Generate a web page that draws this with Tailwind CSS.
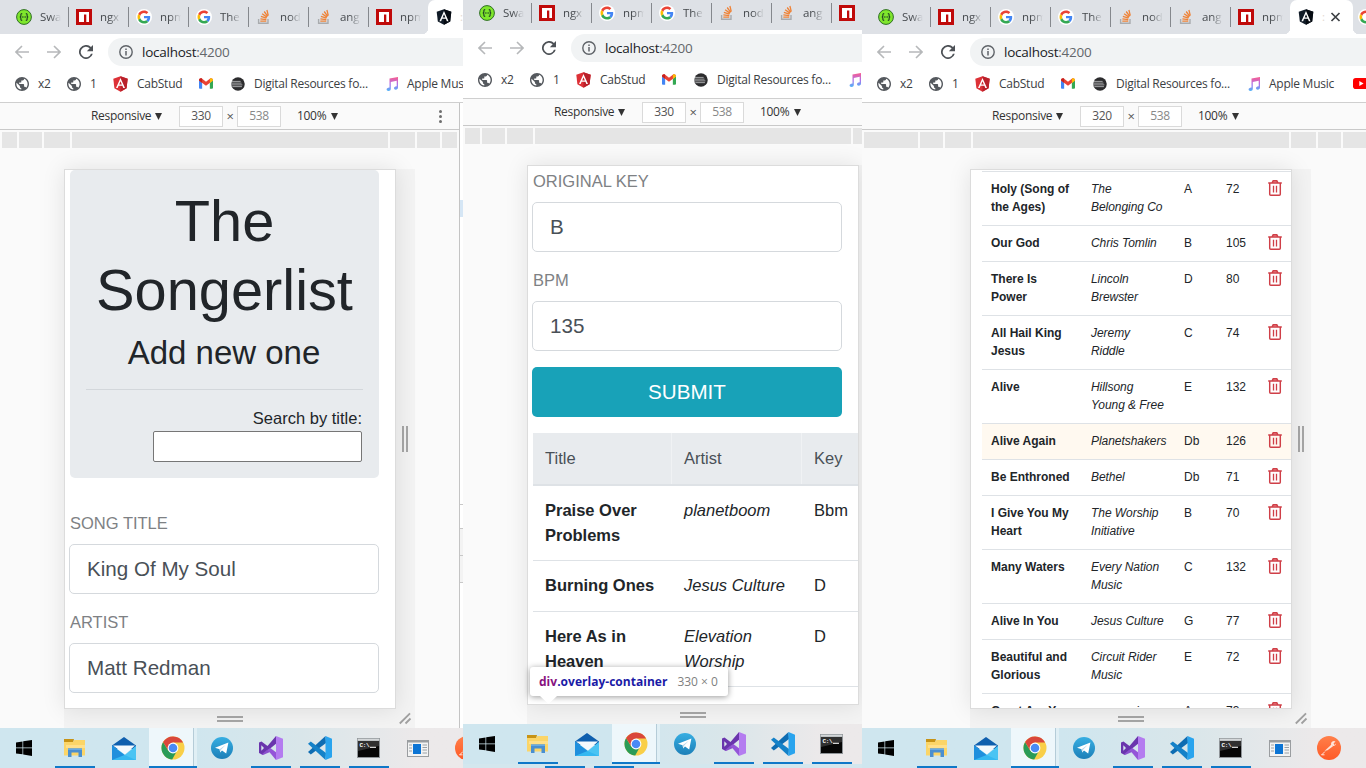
<!DOCTYPE html>
<html lang="en">
<head>
<meta charset="utf-8">
<title>The Songerlist</title>
<script src="https://cdn.jsdelivr.net/npm/@tailwindcss/browser@4"></script>
</head>
<body class="w-[1366px] h-[768px] overflow-hidden bg-white font-['Open_Sans',sans-serif]">
<svg width="0" height="0" class="absolute" aria-hidden="true">
  <defs>
    <linearGradient id="gm" x1="0" y1="0" x2="0" y2="1"><stop offset="0" stop-color="#fa5c8d"/><stop offset=".5" stop-color="#b070ea"/><stop offset="1" stop-color="#4fb4f7"/></linearGradient>
    <linearGradient id="gt" x1="0" y1="0" x2="0" y2="1"><stop offset="0" stop-color="#37aee2"/><stop offset="1" stop-color="#1c7fb8"/></linearGradient>
    <linearGradient id="gp" x1="0" y1="0" x2="0" y2="1"><stop offset="0" stop-color="#ff7f4a"/><stop offset="1" stop-color="#ff5a26"/></linearGradient>
  </defs>
  <symbol id="swagger" viewBox="0 0 16 16"><circle cx="8" cy="8" r="7.400" fill="#7fe62c" stroke="#2f6f25" stroke-width="1"/><path d="M6.200 4.600c-1.500 0-1.300.6-1.300 1.800 0 .9-.3 1.500-1.100 1.600.8.100 1.100.7 1.100 1.600 0 1.200-.2 1.800 1.300 1.800M9.800 4.600c1.500 0 1.300.6 1.300 1.800 0 .9.3 1.500 1.100 1.600-.8.100-1.100.7-1.100 1.600 0 1.200.2 1.800-1.300 1.800" fill="none" stroke="#1d3b24" stroke-width="1.100"/><path d="M5.800 8h4.500" stroke="#1d3b24" stroke-width="1.200" stroke-dasharray="1.200 .4"/></symbol>
  <symbol id="npm" viewBox="0 0 16 16"><path fill="#c00a0a" d="M0 0h16v16H0z"/><path fill="#fff" d="M3 3h10v10h-2.700V5.600H8V13H3z"/></symbol>
  <symbol id="google" viewBox="0 0 48 48"><circle cx="24" cy="24" r="24" fill="#fff"/><g transform="translate(4.500 4.500) scale(.81)"><path fill="#EA4335" d="M24 9.500c3.540 0 6.710 1.220 9.210 3.600l6.850-6.850C35.900 2.380 30.470 0 24 0 14.620 0 6.510 5.380 2.560 13.220l7.980 6.190C12.430 13.720 17.740 9.500 24 9.500z"/><path fill="#4285F4" d="M46.980 24.550c0-1.570-.15-3.090-.38-4.550H24v9.020h12.940c-.58 2.960-2.260 5.480-4.780 7.180l7.730 6c4.510-4.180 7.090-10.360 7.090-17.650z"/><path fill="#FBBC05" d="M10.530 28.590c-.48-1.450-.76-2.990-.76-4.590s.27-3.140.76-4.590l-7.980-6.190C.92 16.460 0 20.120 0 24c0 3.880.92 7.540 2.560 10.780l7.970-6.190z"/><path fill="#34A853" d="M24 48c6.480 0 11.930-2.130 15.890-5.810l-7.730-6c-2.150 1.450-4.920 2.300-8.160 2.300-6.260 0-11.570-4.220-13.470-9.910l-7.980 6.190C6.510 42.620 14.620 48 24 48z"/></g></symbol>
  <symbol id="so" viewBox="0 0 16 16"><path d="M2.600 10v4.200h9.400V10" fill="none" stroke="#a9abae" stroke-width="1.400"/><g stroke="#ef8236" stroke-width="1.300"><path d="M4.300 12.100h6M4.400 9.900l5.900.7M4.900 7.300l5.600 1.900M6.100 4.800l4.900 3.300M8.200 2.500l3.500 4.900M10.900 1l1.400 5.600"/></g></symbol>
  <symbol id="ngdark" viewBox="28 28 194 204"><path fill="#111b27" d="M125 30 31.900 63.200l14.200 123.100L125 230l78.900-43.700 14.200-123.100z"/><path fill="#060b12" d="M125 30v200l78.900-43.700 14.200-123.100z"/><path fill="#fff" d="M125 52.100 66.800 182.600h21.700l11.700-29.200h49.400l11.700 29.200H183L125 52.100zm17 83.300h-34l17-40.900z"/></symbol>
  <symbol id="ng" viewBox="28 28 194 204"><path fill="#dd3137" d="M125 30 31.900 63.200l14.200 123.100L125 230l78.900-43.700 14.200-123.100z"/><path fill="#b9202a" d="M125 30v200l78.900-43.700 14.200-123.100z"/><path fill="#fff" d="M125 52.100 66.800 182.600h21.700l11.700-29.200h49.400l11.700 29.200H183L125 52.100zm17 83.300h-34l17-40.900z"/></symbol>
  <symbol id="globe" viewBox="2 2 20 20"><path fill="#55595e" d="M12 2C6.480 2 2 6.480 2 12s4.480 10 10 10 10-4.480 10-10S17.520 2 12 2zm-1 17.930c-3.950-.49-7-3.850-7-7.930 0-.62.08-1.210.21-1.790L9 15v1c0 1.100.9 2 2 2v1.930zm6.900-2.540c-.26-.81-1-1.390-1.900-1.390h-1v-3c0-.55-.45-1-1-1H8v-2h2c.55 0 1-.45 1-1V7h2c1.100 0 2-.9 2-2v-.41c2.930 1.190 5 4.060 5 7.410 0 2.080-.8 3.970-2.100 5.390z"/></symbol>
  <symbol id="gmailico" viewBox="0 0 16 12"><path fill="#4285f4" d="M0 2.500V10.500A1.200 1.200 0 0 0 1.200 12H3.600V5z"/><path fill="#34a853" d="M12.400 12h2.400a1.200 1.200 0 0 0 1.200-1.300V2.500L12.400 5z"/><path fill="#ea4335" d="M0 2.600C0 .4 2 -.5 3.600.6L8 4 12.400.6C14 -.5 16 .4 16 2.600L8 8.700z"/><path fill="#fbbc04" d="M12.400.6C14 -.5 16 .4 16 2.600L12.400 5.400z"/><path fill="#c5221f" d="M3.600.6C2 -.5 0 .4 0 2.600L3.600 5.400z"/></symbol>
  <symbol id="res" viewBox="0 0 16 16"><circle cx="8" cy="8" r="7.700" fill="#2c2c2e"/><path d="M1 5h10M0 7h12M0 9h13M1.500 11h11" stroke="#a9aaac" stroke-width="1.100"/></symbol>
  <symbol id="music" viewBox="0 0 12 14"><path fill="url(#gm)" d="M3.500 1.600 12 0v10.600c0 1.300-1 2.200-2.200 2.200S8 12 8 11.100s.8-1.700 2.700-1.900V3.800L4.800 5v6.800C4.800 13.200 3.800 14 2.500 14S.6 13.200.6 12.300s.9-1.700 2.900-1.900z"/></symbol>
  <symbol id="yt" viewBox="0 0 16 11"><rect width="16" height="11" rx="2.800" fill="#f00"/><path fill="#fff" d="M6.300 3v5l4.300-2.500z"/></symbol>
  <symbol id="back" viewBox="0 0 14 14"><path d="M14 7H1.300M7 1 1 7l6 6" fill="none" stroke="currentColor" stroke-width="1.600"/></symbol>
  <symbol id="reload" viewBox="0 0 24 24"><path fill="#4d5156" d="M20.500 3.500A12 12 0 1 0 23.600 15h-3.100A9 9 0 1 1 18.300 5.700L13.500 10.500H24V0z"/></symbol>
  <symbol id="info" viewBox="0 0 14 14"><circle cx="7" cy="7" r="6.200" fill="none" stroke="#5f6368" stroke-width="1.400"/><path d="M7 6v4.400M7 3.500v1.500" stroke="#5f6368" stroke-width="1.500"/></symbol>
  <symbol id="tri" viewBox="0 0 7 7"><path d="M0 0h7L3.500 7z" fill="#333"/></symbol>
  <symbol id="trash" viewBox="0 0 14 16"><path d="M4.500 2.800 5.300.8h3.400l.8 2z" fill="#f08a90"/><path d="M.2 3h13.600M4.200 2.600 5.200.8h3.600l1 1.800M1.700 3.400v10.800c0 .7.400 1 1 1h8.600c.6 0 1-.3 1-1V3.400" fill="none" stroke="#cf3f47" stroke-width="1.450"/><path d="M5.500 5.800v6.600M8.500 5.800v6.600" stroke="#cf3f47" stroke-width="1.300"/></symbol>
  <symbol id="win" viewBox="0 0 16 16"><path d="M0 2.500 6.500 1.500v6H0zM7.200 1.300 16 0v7.500H7.200zM0 8.200h6.500v6.100L0 13.400zM7.200 8.200H16V16l-8.800-1.400z"/></symbol>
  <symbol id="folder" viewBox="0 0 22 20"><path fill="#c79316" d="M0 1h10l-1 4H0z"/><path fill="#fbd568" d="M0 4h9l1.500-2H21v15.500H0z"/><path fill="#ffe08a" d="M2 7h19v3H2z"/><path fill="#4a8fd0" d="M4 19V10.500h14V19h-3.500v-4.500h-7V19z"/><path fill="#69abe4" d="M4 10.500h14V12H4z"/></symbol>
  <symbol id="mail" viewBox="0 0 24 23"><path fill="#0f5fae" d="M0 8.500 12 0l12 8.500V12H0z"/><path fill="#f4f9fd" d="M1 8.500h22L13 17.500z"/><path fill="#35b8f1" d="M0 8.500 13 18 24 9v14H0z"/><path fill="#1f8fdd" d="M0 8.500 12.500 18 0 23z"/><path fill="#59cbf5" d="M24 23V9L12.500 18z" opacity=".6"/></symbol>
  <symbol id="chrome" viewBox="0 0 24 24"><circle cx="12" cy="12" r="11.500" fill="#f9cf48"/><path fill="#2a9b57" d="M2.100 6.100A11.500 11.500 0 0 0 11.200 23.500l4.900-8.900L12 12 7.300 14.700z"/><path fill="#d9473b" d="M2.100 6.100 7.300 14.500 12 6.600h10.100A11.500 11.500 0 0 0 2.100 6.100z"/><circle cx="12" cy="12" r="5.400" fill="#fff"/><circle cx="12" cy="12" r="4.300" fill="#4a8af4"/></symbol>
  <symbol id="tele" viewBox="0 0 22 22"><circle cx="11" cy="11" r="11" fill="url(#gt)"/><path fill="#fff" d="M4 10.700 17.400 5.400 15.200 16.600 11 13.600 9.200 15.600 8.600 12.300z"/><path fill="#b9d7ea" d="m8.600 12.300 6.200-4.600-5 5.300-.6 2.600z"/></symbol>
  <symbol id="vs" viewBox="0 0 24 24"><path fill="#6a35ad" fill-rule="evenodd" d="M0 6.500 2.500 5.500 8.500 10 17 0v7.800L3.500 18.700 0 17zM2.300 9.300v5.400L5 12z"/><path fill="#9455d8" d="M8.700 14 11.300 12 17 16.200V24z"/><path fill="#8a50cc" d="m2.500 18.500 6-5 2.500 2.500-7 3z"/><path fill="#b47cf0" d="m17 0 7 2.800v18.400L17 24z"/></symbol>
  <symbol id="code" viewBox="0 0 24 24"><path fill="#0e6cb2" d="m17.500 0 .5 7L2.800 18.400 0 16z"/><path fill="#1481c8" d="m0 7.700 2.800-2.300L18 17l-.5 7z"/><path fill="#29a4ee" d="m17.500 0 6.500 2.700v18.600L17.500 24z"/></symbol>
  <symbol id="cmd" viewBox="0 0 23 20"><path fill="#8f9498" d="M0 0h23v20H0z"/><path fill="#d4d7d9" d="M.7.700h21.600v2H.7z"/><path fill="#060606" d="M1 3h21v16H1z"/><path fill="#303030" d="M1 3h21v5L1 13z"/><text x="2.500" y="9" font-size="6" font-family="Liberation Mono" font-weight="700" fill="#fff" textLength="10">C:\</text><path d="M13 9.300h6" stroke="#fff"/></symbol>
  <symbol id="appw" viewBox="0 0 22 17"><path fill="#9a9da0" d="M0 0h22v17H0z"/><path fill="#f3f3f3" d="M1 2.500h20V16H1z"/><path fill="#0c74d4" d="M6 4h8v10H6z"/><path stroke="#9aa0a5" d="M2 5h3M2 8h3M2 11h3M15.500 5H20M15.500 7.500H20M15.500 10H20M15.500 13H20"/></symbol>
  <symbol id="postman" viewBox="0 0 24 24"><circle cx="12" cy="12" r="12" fill="url(#gp)"/><path d="m4.500 19 3.500-3.500" stroke="#ffe4d9" stroke-width="1"/><path d="M4.500 18.800h3" stroke="#ffe4d9" stroke-width="1"/><path d="m7.500 15 7-6.500 1.500 1.800-5.500 4z" fill="#ffe4d9"/><path d="M14 8.500a3 3 0 0 1 4.500-3l-2 2 1 1.500 1.500-1.500a2.600 2.600 0 0 1-3.500 2.300z" fill="#ffe4d9"/></symbol>
</svg>

<main id="screens" class="flex h-[768px] w-[1366px] overflow-hidden"></main>

<script>
const icon = (id, w, h, cls = '') => `<svg class="block shrink-0 ${cls}" width="${w}" height="${h}"><use href="#${id}"/></svg>`;

const tabs = [['swagger','Swa'],['npm','ngx'],['google','npm'],['google','The'],['so','nod'],['so','ang'],['npm','npm']];

const tabStrip = p => `
  <div class="flex shrink-0 flex-col justify-end overflow-hidden bg-[#dee1e6]" style="height:${34 + p.top}px">
    <div class="flex h-[34px] shrink-0 pl-[9px]">
      ${tabs.map(([ic, t], i) => `<div class="flex h-full w-[60px] shrink-0 items-center pl-[7px]">
        ${icon(ic, 16, 16)}
        <span class="ml-2 w-[21px] overflow-hidden whitespace-nowrap text-[11.500px] tracking-[-0.1px] text-[#45494d] [mask-image:linear-gradient(to_right,black_45%,transparent)]">${t}</span>
        ${i < 6 ? '<i class="ml-auto h-5 w-px shrink-0 bg-[#85888d]"></i>' : ''}
      </div>`).join('')}
      ${p.id === 2 ? '' : `<div class="relative -ml-px flex h-full w-[63px] shrink-0 items-center rounded-t-[7px] bg-white pl-2 before:absolute before:-left-[6px] before:bottom-0 before:size-[6px] before:bg-[radial-gradient(circle_at_0_0,transparent_6px,white_6.500px)] after:absolute after:-right-[6px] after:bottom-0 after:size-[6px] after:bg-[radial-gradient(circle_at_100%_0,transparent_6px,white_6.500px)]">
        ${icon('ngdark', 16, 16)}
        <span class="ml-2 w-[6px] overflow-hidden text-[11.500px] text-[#e2d8cf]">:</span>
        <svg class="-ml-[2px] block" width="20" height="16"><path d="m5.500 4 8 8m0-8-8 8" stroke="#3c4043" stroke-width="1.700"/></svg>
      </div>
      <div class="flex h-full items-center pl-[5px]">${icon('google', 16, 16)}</div>`}
    </div>
  </div>`;

const addressBar = () => `
  <div class="flex h-9 shrink-0 items-center bg-white pl-[15px]">
    ${icon('back', 14, 14, 'text-[#b6b8ba]')}
    ${icon('back', 14, 14, 'ml-[18px] rotate-180 text-[#b6b8ba]')}
    ${icon('reload', 14, 14, 'ml-[18px]')}
    <div class="ml-[15px] flex h-7 grow items-center rounded-l-full bg-[#f1f3f4] pl-[11px]">
      ${icon('info', 14, 14)}
      <span class="ml-[9px] whitespace-nowrap text-[13.500px] tracking-[-0.25px] text-[#202124]">localhost<span class="text-[#63676b]">:4200</span></span>
    </div>
  </div>`;

const mark = (ic, w, h, t) => `<div class="flex items-center whitespace-nowrap text-[12px] tracking-[-0.26px] text-[#3c4043]">${icon(ic, w, h)}<span class="ml-[9px]">${t}</span></div>`;
const bookmarks = () => `
  <div class="grid h-[33px] shrink-0 grid-cols-[52px_46px_86px_32px_155px_105px_80px] items-center border-b border-[#cfcfcf] bg-white pb-[5px] pl-[15px]">
    ${mark('globe', 14, 14, 'x2')}${mark('globe', 14, 14, '1')}${mark('ng', 15, 16, 'CabStud')}${mark('gmailico', 14, 11, '')}${mark('res', 14, 14, 'Digital Resources fo...')}${mark('music', 12, 14, 'Apple Music')}${mark('yt', 16, 11, '')}
  </div>`;

const deviceBar = p => `
  <div class="flex h-[27px] shrink-0 items-center border-b border-[#c9c9c9] bg-[#fafafa] text-[12px] tracking-[-0.3px] text-[#333]" style="padding-left:${p.barX}px">
    <span class="w-[64px] whitespace-nowrap">Responsive</span>${icon('tri', 7, 7)}
    <span class="ml-[17px] flex h-[21px] w-[44px] items-center justify-center border border-[#dadada] bg-white text-[#555]">${p.w}</span>
    <span class="w-[14px] pt-[2px] text-center text-[13px] text-[#555]">×</span>
    <span class="flex h-[21px] w-[44px] items-center justify-center border border-[#dadada] bg-white text-[#888]">538</span>
    <span class="ml-[16px] w-[34px] whitespace-nowrap">100%</span>${icon('tri', 7, 7)}
    ${p.id === 1 ? '<span class="ml-[101px] flex flex-col gap-[2px]"><i class="size-[3px] rounded-full bg-[#6e6e6e]"></i><i class="size-[3px] rounded-full bg-[#6e6e6e]"></i><i class="size-[3px] rounded-full bg-[#6e6e6e]"></i></span>' : ''}
  </div>`;

const ruler = p => `
  <div class="flex h-[19px] shrink-0 gap-[2px] overflow-hidden bg-[#fafafa] pl-[2px] pt-[2px]">
    ${p.ruler.map(w => `<i class="h-4 shrink-0 bg-[#e5e5e5]" style="width:${w}px"></i>`).join('')}
  </div>`;

const device = p => `
  <div class="flex min-h-0 grow flex-col overflow-hidden bg-[#fafafa] pt-[20px]" style="padding-left:${p.devX}px">
    <div class="flex h-[540px] shrink-0">
      <div class="relative z-10 shrink-0 overflow-hidden border border-[#dcdcdc] bg-white font-['Liberation_Sans',Arial,sans-serif] text-[#212529] shadow-[0_0_22px_rgba(0,0,0,0.1)]" style="width:${p.devW}px">${p.body}</div>
      <div class="flex w-[19px] shrink-0 items-center gap-[2px] bg-[#f3f3f3] pl-[6px]"><i class="h-[26px] w-[2px] bg-[#a6a6a6]"></i><i class="h-[26px] w-[2px] bg-[#a6a6a6]"></i></div>
    </div>
    <div class="flex h-[19px] shrink-0 bg-[#f3f3f3]" style="width:${p.devW + 19}px">
      <div class="flex shrink-0 flex-col items-center justify-center gap-[2px]" style="width:${p.devW - 1}px"><i class="h-[2px] w-[26px] bg-[#a6a6a6]"></i><i class="h-[2px] w-[26px] bg-[#a6a6a6]"></i></div>
      <svg class="ml-[4px] mt-[3px] block shrink-0" width="13" height="13"><path d="M.8 11.500 11 1.300M6.500 11.500l5-5" stroke="#a0a0a0" stroke-width="1.800"/></svg>
    </div>
  </div>`;

const apps = [['folder',22,20,1],['mail',24,23,0],['chrome',24,24,2],['tele',22,22,0],['vs',24,24,1],['code',24,24,1],['cmd',23,20,1],['appw',22,17,0],['postman',24,24,0]];
const taskbar = () => `
  <div class="flex h-10 shrink-0 overflow-hidden bg-linear-to-r from-[#cfe6ef] from-40% via-[#d9e6ea] via-65% to-[#ece9ea] to-90%">
    <div class="flex h-10 w-[50px] shrink-0 items-center pl-4">${icon('win', 16, 16)}</div>
    ${apps.map(([n, w, h, s]) => s === 2
      ? `<div class="flex h-10 w-[49px] shrink-0 flex-col pl-px"><div class="flex h-[38px]"><div class="flex w-[45px] items-center justify-center border-r border-[#b5ccd8] bg-[#eef7fb] pl-[4px] pt-[2px]">${icon(n, w, h)}</div><i class="w-[3px] bg-[#e0eff5]"></i></div><i class="h-[2px] w-[48px] bg-[#0f78c8]"></i></div>`
      : `<div class="flex h-10 w-[49px] shrink-0 flex-col items-center"><div class="flex h-[38px] items-center pt-[2px]">${icon(n, w, h)}</div>${s ? '<i class="h-[2px] w-10 bg-[#0f78c8]"></i>' : ''}</div>`).join('')}
  </div>`;

const field = (label, value) => `
  <div class="h-[99px]">
    <div class="h-[33px] pl-px text-[16.500px] leading-[25px] text-[#7e8184]">${label}</div>
    <div class="flex h-[50px] items-center rounded-[5px] border border-[#d5d9dd] pl-[17px] text-[20.600px] text-[#495057]">${value}</div>
  </div>`;

const body1 = `
  <div class="ml-[5px] mr-[16px] h-[308px] rounded-[5px] bg-[#e8ebee] px-4 pt-[17px]">
    <h1 class="text-center text-[57.750px] leading-[69.300px]">The<br>Songerlist</h1>
    <h2 class="mt-[7px] -ml-px h-[56px] text-center text-[33px] leading-[40px]">Add new one</h2>
    <div class="border-t border-[#d3d7db]"></div>
    <div class="mt-[16px] mr-px text-right text-[16.500px] leading-[25px]">Search by title:</div>
    <div class="ml-auto mr-px h-[31px] w-[209px] rounded-[2px] border border-[#767676] bg-white"></div>
  </div>
  <div class="ml-[4px] mr-[16px] mt-[33px]">${field('SONG TITLE', 'King Of My Soul')}${field('ARTIST', 'Matt Redman')}</div>`;

const trow2 = (t, a, k, h) => `<div class="grid grid-cols-[139px_130px_60px] border-b border-[#dee2e6] pt-[12px] pl-[12px] leading-[24.750px]" style="height:${h}px"><b>${t}</b><i>${a}</i><span>${k}</span></div>`;
const body2 = `
  <div class="ml-[4px] mr-[16px] mt-[3px]">${field('ORIGINAL KEY', 'B')}${field('BPM', '135')}
    <div class="flex h-[50px] items-center justify-center rounded-[5px] bg-[#18a2b8] text-[20.600px] text-white">SUBMIT</div>
  </div>
  <div class="ml-[5px] mt-[16px] text-[16.500px]">
    <div class="grid h-[53px] grid-cols-[139px_130px_60px] items-center border-b-2 border-[#dee2e6] bg-[#e8ebee] text-[#495057]">
      <span class="flex h-full items-center border-r border-[#f0f2f4] pl-[12px]">Title</span><span class="flex h-full items-center border-r border-[#f0f2f4] pl-[12px]">Artist</span><span class="pl-[12px]">Key</span>
    </div>
    ${trow2('Praise Over<br>Problems', 'planetboom', 'Bbm', 75)}
    ${trow2('Burning Ones', 'Jesus Culture', 'D', 51)}
    ${trow2('Here As in<br>Heaven', 'Elevation<br>Worship', 'D', 75)}
  </div>`;

const songs = [
  ['Holy (Song of<br>the Ages)','The<br>Belonging Co','A',72,54],['Our God','Chris Tomlin','B',105,36],['There Is<br>Power','Lincoln<br>Brewster','D',80,54],
  ['All Hail King<br>Jesus','Jeremy<br>Riddle','C',74,54],['Alive','Hillsong<br>Young &amp; Free','E',132,54],['Alive Again','Planetshakers','Db',126,36],
  ['Be Enthroned','Bethel','Db',71,36],['I Give You My<br>Heart','The Worship<br>Initiative','B',70,54],['Many Waters','Every Nation<br>Music','C',132,54],
  ['Alive In You','Jesus Culture','G',77,36],['Beautiful and<br>Glorious','Circuit Rider<br>Music','E',72,54],['Great Are You','some voice','A',73,36]];
const body3 = `<div class="ml-[11px] mt-px text-[12px] leading-[18px]">
  ${songs.map(([t, a, k, b, h]) => `<div class="grid grid-cols-[100px_93px_42px_42px_20px] border-t border-[#dee2e6] pl-[9px] pt-[8px] ${t === 'Alive Again' ? 'bg-[#fff9f0]' : ''}" style="height:${h}px"><b>${t}</b><i class="tracking-[-0.05px]">${a}</i><span>${k}</span><span>${b}</span>${icon('trash', 14, 16)}</div>`).join('')}
</div>`;

const panels = [
  { id: 1, top: 0, width: 463, barX: 91, w: 330, devX: 64, devW: 332, body: body1, ruler: [15,23,26,316,25,23,15] },
  { id: 2, top: -4, width: 399, barX: 91, w: 330, devX: 64, devW: 332, body: body2, ruler: [15,23,26,316,25] },
  { id: 3, top: 0, width: 504, barX: 130, w: 320, devX: 108, devW: 322, body: body3, ruler: [54,23,26,316,25,23,26] }
];

const tooltip = `
  <div class="absolute left-[67px] top-[667px] z-20 flex h-[29px] w-[198px] items-center rounded-[3px] bg-white pl-[9px] text-[12px] shadow-[0_1px_6px_rgba(0,0,0,0.4)]">
    <b class="whitespace-nowrap font-bold tracking-[0.02px] text-[#1a1aa6]"><span class="text-[#881280]">div</span>.overlay-container</b>
    <span class="ml-[10px] whitespace-nowrap text-[#808080]">330 × 0</span>
    <svg class="absolute left-[10px] top-[29px]" width="17" height="8"><path d="M0 0h17L8.500 8z" fill="#fff"/></svg>
  </div>`;

const sliver = `
  <div class="flex w-[4px] shrink-0 flex-col border-l border-[#c4c4c4] bg-white">
    <i class="mt-[97px] h-[17px] bg-[#d5e6f5]"></i>
    <i class="mt-[287px] h-[24px] border-t border-[#c8c8c8]"></i>
    <i class="h-[27px] border-t border-[#c8c8c8] bg-[#f3f3f3]"></i>
    <i class="h-[28px] border-y border-[#c8c8c8] bg-[#f3f3f3]"></i>
  </div>`;

document.getElementById('screens').innerHTML = panels.map(p => `
  <section class="relative flex h-[768px] shrink-0 flex-col overflow-hidden bg-white" style="width:${p.width}px">
    ${tabStrip(p)}${addressBar()}${bookmarks()}
    <div class="flex min-h-0 grow">
      <div class="flex min-w-0 grow flex-col overflow-hidden">${deviceBar(p)}${ruler(p)}${device(p)}</div>
      ${p.id === 1 ? sliver : ''}
    </div>
    ${taskbar()}
    ${p.id === 2 ? tooltip + '<div class="flex h-1 shrink-0 items-end gap-[9px] bg-[#d3e7ee] pl-[82px]"><i class="h-[2px] w-10 bg-[#0f78c8]"></i><i class="h-[2px] w-10 bg-[#0f78c8]"></i></div>' : ''}
  </section>`).join('');
</script>
</body>
</html>
